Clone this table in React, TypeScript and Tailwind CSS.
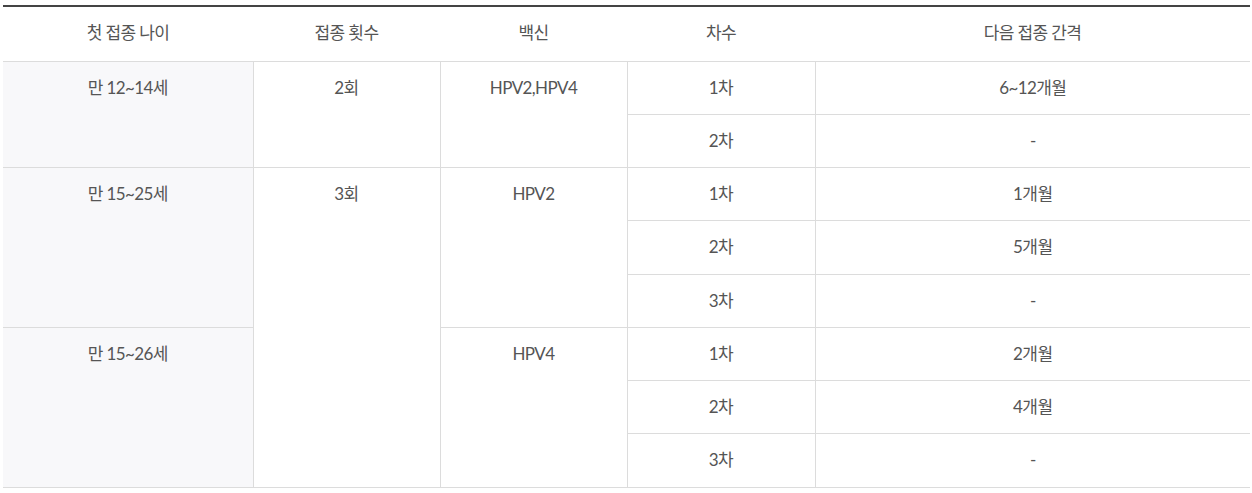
import React from "react";

// HPV 접종 일정 표 — 첫 열과 접종 횟수는 rowSpan 으로 묶는다.

type Row = {
  age?: { text: string; span: number };
  count?: { text: string; span: number };
  vaccine?: { text: string; span: number };
  dose: string;
  interval: string;
};

const rows: Row[] = [
  { age: { text: "만 12~14세", span: 2 }, count: { text: "2회", span: 2 }, vaccine: { text: "HPV2,HPV4", span: 2 }, dose: "1차", interval: "6~12개월" },
  { dose: "2차", interval: "-" },
  { age: { text: "만 15~25세", span: 3 }, count: { text: "3회", span: 6 }, vaccine: { text: "HPV2", span: 3 }, dose: "1차", interval: "1개월" },
  { dose: "2차", interval: "5개월" },
  { dose: "3차", interval: "-" },
  { age: { text: "만 15~26세", span: 3 }, vaccine: { text: "HPV4", span: 3 }, dose: "1차", interval: "2개월" },
  { dose: "2차", interval: "4개월" },
  { dose: "3차", interval: "-" },
];

const font = { fontFamily: "Lato, 'Noto Sans CJK KR', sans-serif" };

export default function App() {
  const spanCell = "border border-[#dcdcdc] align-top pt-[14px] text-center";
  return (
    <div className="bg-white pl-[3px] pt-[5px] w-[1252px] h-[493px]" style={font}>
      <table className="w-[1247px] table-fixed border-collapse text-[17px] leading-[24px] text-[#555] tracking-[-0.6px]">
        <colgroup>
          <col className="w-[250px]" />
          <col className="w-[187px]" />
          <col className="w-[187px]" />
          <col className="w-[188px]" />
          <col className="w-[435px]" />
        </colgroup>
        <thead>
          <tr className="h-[55px] border-t-2 border-[#444]">
            {["첫 접종 나이", "접종 횟수", "백신", "차수", "다음 접종 간격"].map((h) => (
              <th key={h} className="font-normal text-center align-middle border-b border-[#dcdcdc] pb-[2px]">
                {h}
              </th>
            ))}
          </tr>
        </thead>
        <tbody>
          {rows.map((r, i) => (
            <tr key={i} className="h-[53.25px]">
              {r.age && (
                <td rowSpan={r.age.span} className={`${spanCell} border-l-0 bg-[#f8f8fa]`}>
                  {r.age.text}
                </td>
              )}
              {r.count && (
                <td rowSpan={r.count.span} className={spanCell}>
                  {r.count.text}
                </td>
              )}
              {r.vaccine && (
                <td rowSpan={r.vaccine.span} className={spanCell}>
                  {r.vaccine.text}
                </td>
              )}
              <td className="border border-[#dcdcdc] text-center align-middle">{r.dose}</td>
              <td className="border border-[#dcdcdc] border-r-0 text-center align-middle">{r.interval}</td>
            </tr>
          ))}
        </tbody>
      </table>
    </div>
  );
}
